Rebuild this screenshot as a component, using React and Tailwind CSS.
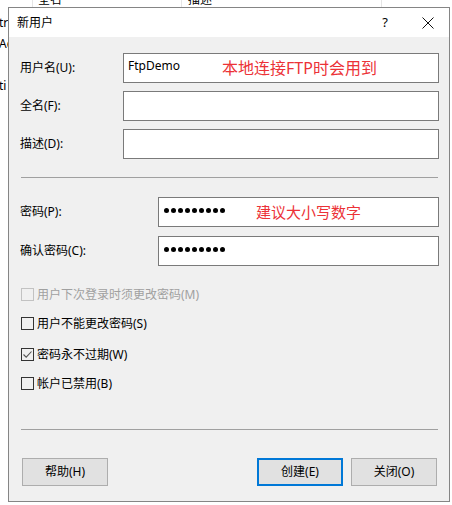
import { useState } from 'react'

const font = "font-['Noto_Sans','Noto_Sans_CJK_SC',sans-serif]"

const Field = ({ label, left, mt, children }) => (
    <div className={`flex items-center ${mt}`}>
        <div className={`${left} text-[12px] text-[#000] leading-none pl-[11px]`}>{label}</div>
        <div className="relative flex-1 h-[30px] mr-[10px] bg-white border border-[#7a7a7a] px-[4px] pt-[4px] text-[12px] leading-[16px] text-black">
            {children}
        </div>
    </div>
)

// masked password, 9 chars
const Dots = () => (
    <div className="flex items-center gap-[2px] h-[16px] pl-[1px] pt-[1px]" aria-label="密码">
        {Array.from({ length: 9 }).map((_, i) => (
            <span key={i} className="w-[5px] h-[5px] rounded-full bg-black" />
        ))}
    </div>
)

const Check = ({ label, checked, disabled, mt }) => (
    <div className={`flex items-center pl-[12px] ${mt}`}>
        <div className={`w-[13px] h-[13px] border flex items-center justify-center bg-transparent ${disabled ? 'border-[#c2c2c2]' : 'border-[#333333]'}`}>
            {checked && (
                <svg width="11" height="11" viewBox="0 0 11 11">
                    <path d="M1.5 5.5 L4.2 8.2 L9.5 2.5" fill="none" stroke="#555" strokeWidth="1.1" />
                </svg>
            )}
        </div>
        <span className={`ml-[3px] text-[12px] leading-none ${disabled ? 'text-[#a0a0a0]' : 'text-black'}`}>{label}</span>
    </div>
)

const Button = ({ children, primary }) => (
    <div className={`w-[86px] h-[28px] flex items-center justify-center bg-[#e1e1e1] text-[12px] text-black ${primary ? 'border-2 border-[#0078d7]' : 'border border-[#adadad]'}`}>
        {children}
    </div>
)

export default function App() {
    const [name] = useState('FtpDemo')

    return (
        <div className={`relative w-[452px] h-[505px] bg-white overflow-hidden ${font}`}>
            {/* window behind the dialog */}
            <div className="absolute left-[32px] top-0 w-px h-[8px] bg-[#e5e5e5]" />
            <div className="absolute left-[181px] top-0 w-px h-[8px] bg-[#e5e5e5]" />
            <div className="absolute left-[381px] top-0 w-px h-[8px] bg-[#e5e5e5]" />
            <div className="absolute left-[38px] top-[-9px] text-[12px] text-black">全名</div>
            <div className="absolute left-[188px] top-[-9px] text-[12px] text-black">描述</div>
            <div className="absolute left-[-1px] top-[14px] text-[12px] text-black">tr</div>
            <div className="absolute left-[-1px] top-[35px] text-[12px] text-black">Ac</div>
            <div className="absolute left-[-1px] top-[77px] text-[12px] text-black">ti</div>

            {/* dialog */}
            <div className="absolute left-[8px] top-[7px] w-[442px] h-[495px] border border-[#858585] flex flex-col bg-[#f0f0f0]">
                <div className="h-[29px] bg-white flex items-center pl-[8px] shrink-0">
                    <span className="text-[12px] text-black">新用户</span>
                    <span className="ml-auto text-[13px] text-black mr-[34px]">?</span>
                    <svg width="12" height="12" viewBox="0 0 12 12" className="mr-[15px]">
                        <path d="M0.5 0.5 L11.5 11.5 M11.5 0.5 L0.5 11.5" stroke="#111" strokeWidth="1" />
                    </svg>
                </div>

                <div className="flex flex-col flex-1">
                    <Field label="用户名(U):" left="w-[114px]" mt="mt-[16px]">
                        <span>{name}</span>
                        <span className="absolute left-[98px] top-[4px] text-[16px] leading-[20px] text-[#ec3237]">本地连接FTP时会用到</span>
                    </Field>
                    <Field label="全名(F):" left="w-[114px]" mt="mt-[8px]" />
                    <Field label="描述(D):" left="w-[114px]" mt="mt-[8px]" />

                    <div className="mt-[18px] ml-[12px] mr-[11px] h-px bg-[#a0a0a0]" />

                    <Field label="密码(P):" left="w-[149px]" mt="mt-[19px]">
                        <Dots />
                        <span className="absolute left-[97px] top-[5px] text-[15px] leading-[18px] text-[#ec3237]">建议大小写数字</span>
                    </Field>
                    <Field label="确认密码(C):" left="w-[149px]" mt="mt-[9px]">
                        <Dots />
                    </Field>

                    <Check label="用户下次登录时须更改密码(M)" disabled mt="mt-[22px]" />
                    <Check label="用户不能更改密码(S)" mt="mt-[16px]" />
                    <Check label="密码永不过期(W)" checked mt="mt-[18px]" />
                    <Check label="帐户已禁用(B)" mt="mt-[16px]" />

                    <div className="mt-[39px] ml-[12px] mr-[11px] h-px bg-[#a0a0a0]" />

                    <div className="flex items-center mt-[28px] pl-[13px] pr-[12px]">
                        <Button>帮助(H)</Button>
                        <div className="ml-auto flex gap-[8px]">
                            <Button primary>创建(E)</Button>
                            <Button>关闭(O)</Button>
                        </div>
                    </div>
                </div>
            </div>
        </div>
    )
}
